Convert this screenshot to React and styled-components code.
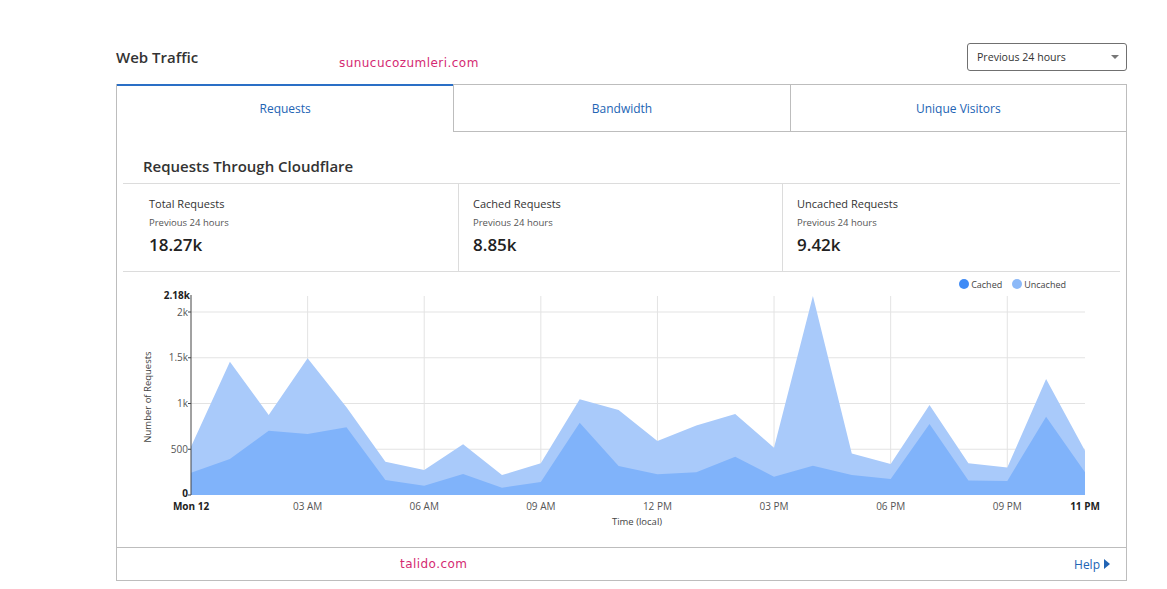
import React from "react";
import styled, { createGlobalStyle } from "styled-components";

const GlobalStyle = createGlobalStyle`
  body {
    margin: 0;
    background: #fff;
    font-family: "Open Sans", "Liberation Sans", sans-serif;
    color: #333;
  }
`;

const Page = styled.div`
  width: 1011px;
  margin-left: 116px;
  padding-top: 43px;
`;

const Header = styled.div`
  display: grid;
  grid-template-columns: 223px 1fr auto;
  align-items: center;
  height: 28px;
  margin-bottom: 13px;
`;

const Title = styled.h2`
  margin: 0;
  font-size: 15px;
  font-weight: 600;
  color: #333;
`;

const Watermark = styled.span`
  font-family: "DejaVu Sans", sans-serif;
  font-size: 12px;
  letter-spacing: 0.45px;
  color: #d42a72;
  margin-top: ${(p) => p.offset || 0}px;
`;

const Select = styled.div`
  box-sizing: border-box;
  width: 160px;
  height: 28px;
  border: 1px solid #707070;
  border-radius: 3px;
  display: flex;
  align-items: center;
  justify-content: space-between;
  padding: 0 7px 0 9px;
  font-size: 10.6px;
  color: #333;
`;

const Caret = styled.span`
  width: 0;
  height: 0;
  border-left: 4px solid transparent;
  border-right: 4px solid transparent;
  border-top: 4px solid #777;
`;

const Card = styled.div`
  border: 1px solid #bdbdbd;
  border-top: none;
`;

const Tabs = styled.div`
  display: grid;
  grid-template-columns: repeat(3, 1fr);
`;

const Tab = styled.div`
  box-sizing: border-box;
  height: 48px;
  display: flex;
  align-items: center;
  justify-content: center;
  font-size: 12px;
  color: #2264b4;
  border-top: ${(p) => (p.active ? "2px solid #2a6fc6" : "1px solid #bdbdbd")};
  border-bottom: ${(p) => (p.active ? "1px solid transparent" : "1px solid #bdbdbd")};
  border-left: ${(p) => (p.first ? "none" : "1px solid #bdbdbd")};
`;

const Body = styled.div`
  padding: 0 6px;
`;

const SectionTitle = styled.h3`
  margin: 0;
  padding: 23px 0 6px 20px;
  font-size: 15px;
  line-height: 22px;
  font-weight: 600;
  color: #333;
`;

const Stats = styled.div`
  display: grid;
  grid-template-columns: 324px 324px 1fr;
  padding-left: 12px;
  border-top: 1px solid #dcdcdc;
  border-bottom: 1px solid #dcdcdc;
  height: 87px;
`;

const Stat = styled.div`
  padding: 12px 14px 0;
  border-right: ${(p) => (p.last ? "none" : "1px solid #dcdcdc")};
`;

const StatLabel = styled.div`
  font-size: 11px;
  line-height: 16px;
  color: #333;
`;

const StatSub = styled.div`
  font-size: 9.5px;
  line-height: 14px;
  margin-top: 4px;
  color: #555;
`;

const StatValue = styled.div`
  font-size: 17px;
  line-height: 24px;
  font-weight: 600;
  color: #222;
  margin-top: 3px;
`;

const ChartArea = styled.div`
  padding: 6px 0 10px;
`;

const Legend = styled.div`
  display: flex;
  justify-content: flex-end;
  gap: 10px;
  padding-right: 54px;
  height: 12px;
  margin-bottom: -6px;
  align-items: center;
`;

const LegendItem = styled.span`
  display: flex;
  align-items: center;
  gap: 2px;
  font-size: 9px;
  color: #444;
`;

const Dot = styled.span`
  width: 10px;
  height: 10px;
  border-radius: 50%;
  background: ${(p) => p.color};
`;

const Footer = styled.div`
  display: flex;
  align-items: center;
  justify-content: space-between;
  height: 32px;
  border-top: 1px solid #bdbdbd;
  padding: 0 16px 0 283px;
`;

const HelpLink = styled.a`
  display: flex;
  align-items: center;
  gap: 4px;
  font-size: 12px;
  color: #2264b4;
  text-decoration: none;
`;

const total = [528, 1457, 874, 1494, 960, 364, 273, 554, 218, 346, 1046, 929, 590, 758, 885, 517, 2175, 455, 339, 983, 346, 299, 1268, 484];
const cached = [244, 393, 703, 667, 740, 164, 102, 229, 80, 142, 790, 317, 226, 248, 419, 200, 320, 218, 175, 776, 157, 153, 856, 248];

const X0 = 68;
const STEP = 38.87;
const Y0 = 211;
const SCALE = 183 / 2000;
const px = (i) => X0 + i * STEP;
const py = (v) => Y0 - v * SCALE;

const area = (top, bottom) => {
  const up = top.map((v, i) => `${px(i).toFixed(1)},${py(v).toFixed(1)}`);
  const down = bottom
    .map((v, i) => `${px(i).toFixed(1)},${py(v).toFixed(1)}`)
    .reverse();
  return up.concat(down).join(" ");
};

const zeros = total.map(() => 0);
const yTicks = [
  { v: 0, label: "0", bold: true },
  { v: 500, label: "500" },
  { v: 1000, label: "1k" },
  { v: 1500, label: "1.5k" },
  { v: 2000, label: "2k" },
];
const xTicks = [
  { h: 0, label: "Mon 12", bold: true },
  { h: 3, label: "03 AM" },
  { h: 6, label: "06 AM" },
  { h: 9, label: "09 AM" },
  { h: 12, label: "12 PM" },
  { h: 15, label: "03 PM" },
  { h: 18, label: "06 PM" },
  { h: 21, label: "09 PM" },
  { h: 23, label: "11 PM", bold: true },
];

const TrafficChart = () => (
  <svg width="997" height="253" style={{ display: "block" }} fontFamily="Open Sans, sans-serif">
    {yTicks.slice(1).map((t) => (
      <line key={t.v} x1={X0} x2={px(23)} y1={py(t.v)} y2={py(t.v)} stroke="#e3e3e3" />
    ))}
    {xTicks.slice(1, -1).map((t) => (
      <line key={t.h} x1={px(t.h)} x2={px(t.h)} y1={12} y2={Y0} stroke="#e3e3e3" />
    ))}
    <polygon points={area(total, zeros)} fill="#a9cafa" />
    <polygon points={area(cached, zeros)} fill="#80b3fa" />
    <line x1={X0} x2={X0} y1={11} y2={Y0} stroke="#444" />
    {yTicks.map((t) => (
      <g key={t.v}>
        <line x1={X0 - 3} x2={X0} y1={py(t.v)} y2={py(t.v)} stroke="#444" />
        <text
          x={X0 - 3}
          y={py(t.v) + (t.v === 0 ? 2 : 3.5)}
          textAnchor="end"
          fontSize="10"
          fontWeight={t.bold ? 700 : 400}
          fill={t.bold ? "#222" : "#555"}
        >
          {t.label}
        </text>
      </g>
    ))}
    <text x={X0 - 1} y={15} textAnchor="end" fontSize="10" fontWeight="700" fill="#222">
      2.18k
    </text>
    {xTicks.map((t) => (
      <text
        key={t.h}
        x={px(t.h)}
        y={226}
        textAnchor="middle"
        fontSize="10"
        fontWeight={t.bold ? 700 : 400}
        fill={t.bold ? "#222" : "#555"}
      >
        {t.label}
      </text>
    ))}
    <text x={514} y={241} textAnchor="middle" fontSize="9.5" fill="#444">
      Time (local)
    </text>
    <text
      transform="translate(28 113) rotate(-90)"
      textAnchor="middle"
      fontSize="9.5"
      fill="#444"
    >
      Number of Requests
    </text>
  </svg>
);

const stats = [
  { label: "Total Requests", value: "18.27k" },
  { label: "Cached Requests", value: "8.85k" },
  { label: "Uncached Requests", value: "9.42k" },
];

const App = () => (
  <>
    <GlobalStyle />
    <Page>
      <Header>
        <Title>Web Traffic</Title>
        <Watermark offset={12}>sunucucozumleri.com</Watermark>
        <Select>
          Previous 24 hours
          <Caret />
        </Select>
      </Header>
      <Card>
        <Tabs>
          <Tab active first>Requests</Tab>
          <Tab>Bandwidth</Tab>
          <Tab>Unique Visitors</Tab>
        </Tabs>
        <Body>
          <SectionTitle>Requests Through Cloudflare</SectionTitle>
          <Stats>
            {stats.map((s, i) => (
              <Stat key={s.label} last={i === stats.length - 1}>
                <StatLabel>{s.label}</StatLabel>
                <StatSub>Previous 24 hours</StatSub>
                <StatValue>{s.value}</StatValue>
              </Stat>
            ))}
          </Stats>
          <ChartArea>
            <Legend>
              <LegendItem>
                <Dot color="#3f8bf6" />
                Cached
              </LegendItem>
              <LegendItem>
                <Dot color="#8cb9f8" />
                Uncached
              </LegendItem>
            </Legend>
            <TrafficChart />
          </ChartArea>
        </Body>
        <Footer>
          <Watermark>talido.com</Watermark>
          <HelpLink href="#">
            Help
            <svg width="6" height="10" viewBox="0 0 6 10">
              <path d="M0 0 L6 5 L0 10 Z" fill="#2264b4" />
            </svg>
          </HelpLink>
        </Footer>
      </Card>
    </Page>
  </>
);

export default App;
